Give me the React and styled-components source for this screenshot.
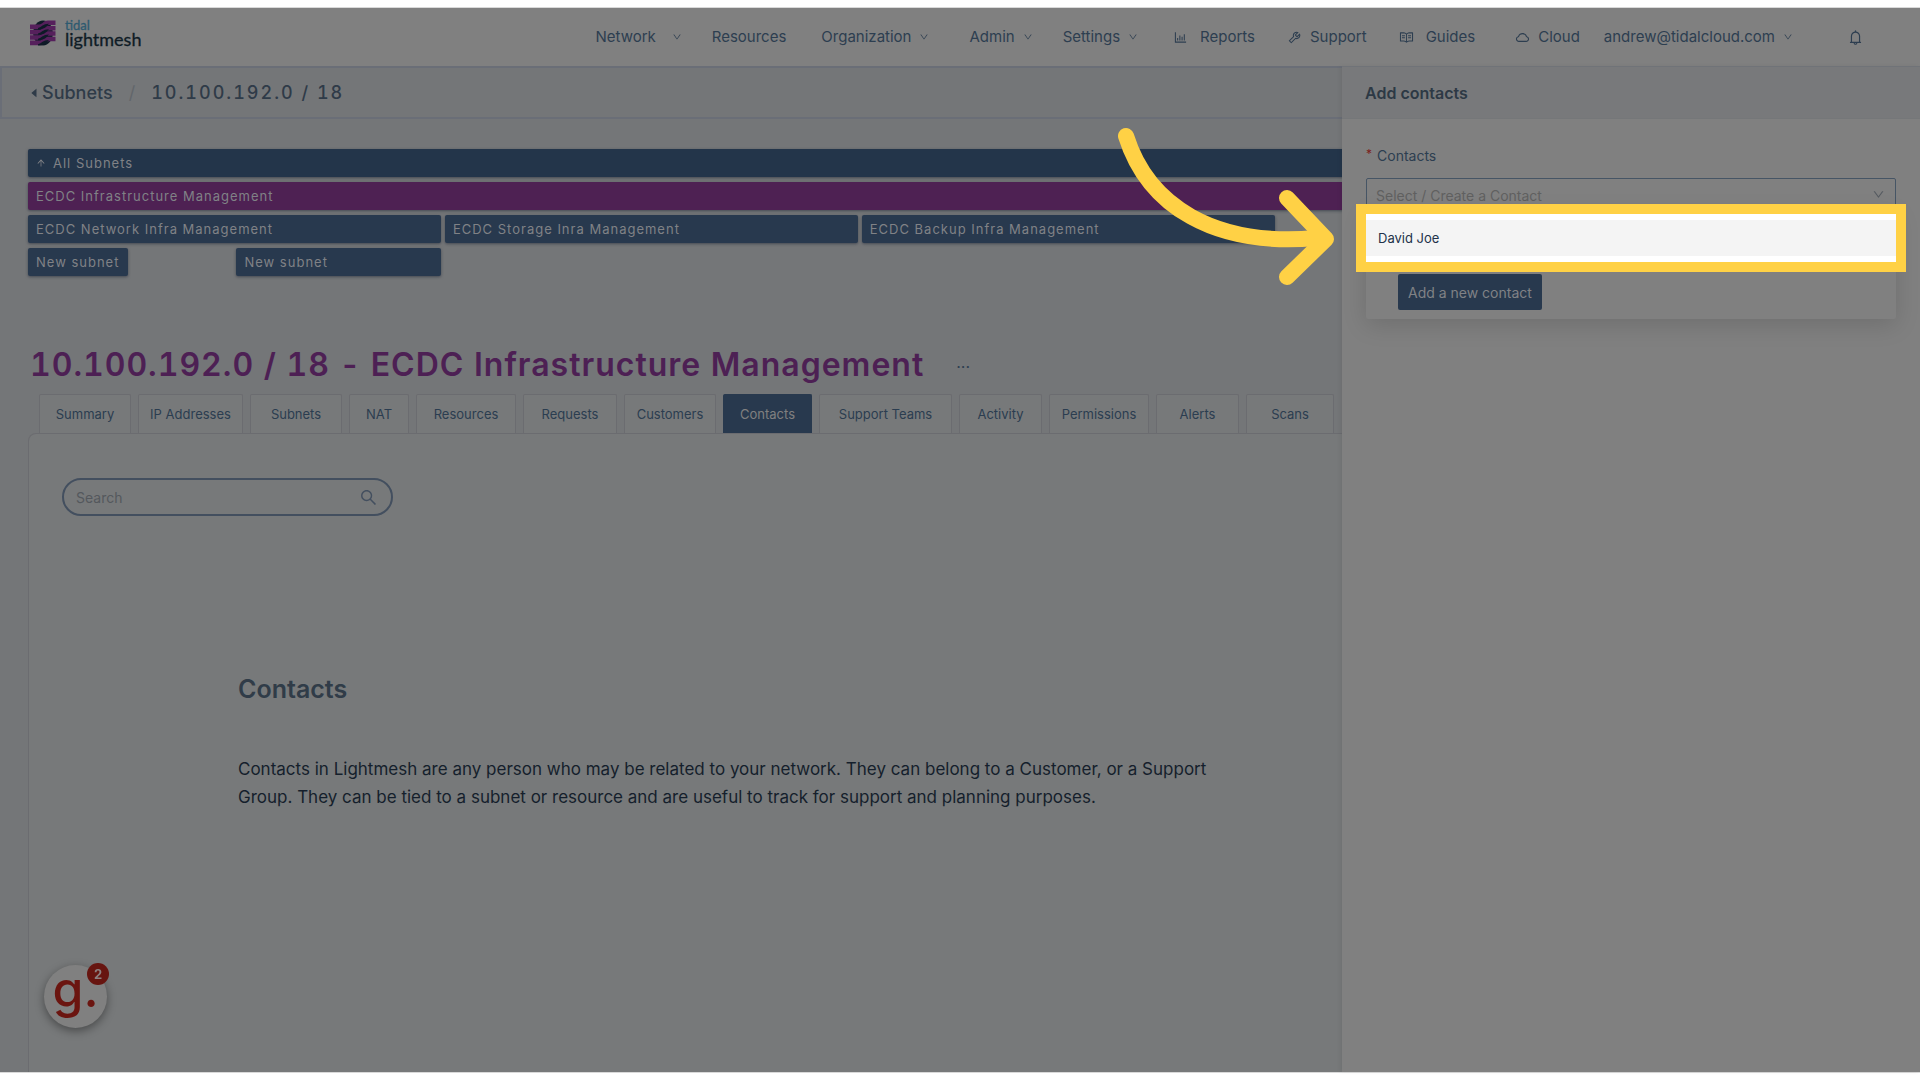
import React from "react";
import styled, { createGlobalStyle } from "styled-components";
import {
  AiFillCaretLeft,
  AiOutlineArrowUp,
  AiOutlineBarChart,
  AiOutlineBell,
  AiOutlineCloud,
  AiOutlineDown,
  AiOutlineRead,
  AiOutlineSearch,
  AiOutlineTool,
} from "react-icons/ai";

const GlobalStyle = createGlobalStyle`
  * {
    box-sizing: border-box;
  }
  body {
    margin: 0;
    background: #ffffff;
    font-family: Inter, "Liberation Sans", sans-serif;
  }
  button, input, select {
    font-family: inherit;
  }
  a {
    color: inherit;
    text-decoration: none;
  }
`;

const Frame = styled.div`
  min-height: 100vh;
  padding: 7px 0;
  display: flex;
  flex-direction: column;
  overflow: hidden;
`;

const Shell = styled.div`
  position: relative;
  flex: 1;
  display: flex;
  flex-direction: column;
  border-top: 1px solid #d9d9d9;
  border-bottom: 1px solid #d9d9d9;
  background: #747678;
  color: #2d3e50;
`;

const TopBar = styled.header`
  display: flex;
  align-items: center;
  justify-content: space-between;
  height: 58px;
  padding: 0 56px 0 30px;
  background: #808080;
`;

const Brand = styled.a`
  display: flex;
  align-items: center;
  gap: 9px;
  margin-bottom: 8px;
`;

const BrandName = styled.span`
  display: flex;
  flex-direction: column;
  font-family: Lato, sans-serif;
  font-size: 18px;
  line-height: 16px;
  color: #0f1c26;
  -webkit-text-stroke: 0.3px currentColor;
`;

const BrandParent = styled.span`
  font-size: 13px;
  line-height: 12px;
  color: #2d5a70;
`;

const Nav = styled.nav`
  display: flex;
  align-items: center;
`;

const NavLink = styled.a`
  display: flex;
  align-items: center;
  gap: ${({ $gap }) => $gap || 8}px;
  margin-left: ${({ $before }) => $before || 32}px;
  font-size: 15px;
  line-height: 24px;
  white-space: nowrap;
`;

const Crumbs = styled.div`
  display: flex;
  align-items: center;
  height: 53px;
  padding: 0 26px;
  border: 2px solid #6a6e77;
  font-size: 18px;
  font-weight: 500;
  color: #2f3b48;
`;

const CrumbLink = styled.a`
  display: flex;
  align-items: center;
  gap: 2px;
`;

const CrumbSlash = styled.span`
  margin: 0 16px;
  font-weight: 400;
  color: #62666b;
`;

const CrumbCurrent = styled.span`
  font-variant-numeric: tabular-nums;
  letter-spacing: 2px;
`;

const SubnetMap = styled.div`
  display: grid;
  grid-template-columns: repeat(18, minmax(0, 1fr));
  column-gap: 4px;
  row-gap: 5px;
  padding: 30px 20px 0 28px;
`;

const SubnetBar = styled.a`
  grid-column: ${({ $from, $span }) => `${$from} / span ${$span}`};
  display: flex;
  align-items: center;
  gap: 7px;
  height: 28px;
  padding: 0 8px;
  border-radius: 2px;
  background: ${({ $tone }) => $tone || "#28394e"};
  box-shadow: 0 1px 3px rgba(20, 30, 45, 0.5);
  font-size: 13px;
  letter-spacing: 1px;
  color: #808286;
  white-space: nowrap;
`;

const TitleRow = styled.div`
  display: flex;
  align-items: center;
  gap: 32px;
  padding: 67px 30px 0;
`;

const Title = styled.h1`
  margin: 0;
  font-size: 32px;
  font-weight: 600;
  font-variant-numeric: tabular-nums;
  line-height: 44px;
  letter-spacing: 1px;
  color: #4d2054;
`;

const MoreButton = styled.button`
  border: none;
  padding: 4px 0 0;
  background: none;
  font-size: 16px;
  color: #2d3e50;
`;

const Tabs = styled.div`
  display: flex;
  gap: 7px;
  padding: 7px 39px 0;
`;

const Tab = styled.button`
  width: ${({ $width }) => $width}px;
  height: 39px;
  padding: 0;
  border: 1px solid ${({ $active }) => ($active ? "#28394e" : "#6b6c70")};
  border-bottom: none;
  border-radius: 2px 2px 0 0;
  background: ${({ $active }) => ($active ? "#28394e" : "#77797a")};
  color: ${({ $active }) => ($active ? "#808080" : "#2b3d50")};
  font-size: 13px;
  white-space: nowrap;
`;

const Panel = styled.section`
  flex: 1;
  margin: 0 28px;
  padding: 44px 33px;
  border: 1px solid #6b6c70;
  border-bottom: none;
  border-radius: 8px 8px 0 0;
  background: #77797a;
`;

const SearchBox = styled.label`
  display: flex;
  align-items: center;
  width: 331px;
  height: 38px;
  padding: 0 13px 0 12px;
  border: 2px solid #434f5f;
  border-radius: 19px;
  color: #434f5f;
`;

const SearchInput = styled.input`
  flex: 1;
  min-width: 0;
  padding: 0;
  border: none;
  outline: none;
  background: none;
  font-size: 14px;
  &::placeholder {
    color: #54585d;
    opacity: 1;
  }
`;

const About = styled.div`
  max-width: 1156px;
  padding: 151px 0 0 176px;
`;

const AboutTitle = styled.h2`
  margin: 0 0 44px;
  font-size: 25px;
  font-weight: 600;
  line-height: 44px;
  color: #303c48;
`;

const AboutText = styled.p`
  margin: 0;
  font-size: 17px;
  line-height: 28px;
  color: #151f2c;
`;

const Drawer = styled.aside`
  position: absolute;
  top: 58px;
  right: 0;
  bottom: 0;
  width: 578px;
  background: #808080;
  box-shadow: -2px 0 4px rgba(0, 0, 0, 0.06);
`;

const DrawerTitle = styled.h2`
  margin: 0;
  height: 53px;
  padding: 0 23px;
  border-top: 1px solid #707378;
  border-bottom: 1px solid #757779;
  background: #78797b;
  font-size: 16px;
  font-weight: 600;
  line-height: 52px;
  color: #2d3945;
`;

const Form = styled.div`
  padding: 25px 24px;
`;

const FieldLabel = styled.label`
  display: flex;
  gap: 5px;
  font-size: 14px;
  line-height: 24px;
`;

const Required = styled.span`
  font-size: 12px;
  line-height: 20px;
  color: #7c201c;
`;

const Field = styled.div`
  position: relative;
  margin-top: 10px;
`;

const Select = styled.select`
  display: block;
  width: 100%;
  height: 34px;
  padding: 0 9px;
  border: 1px solid #465565;
  border-radius: 2px;
  appearance: none;
  background: none;
  font-size: 14px;
  color: #606060;
`;

const SelectArrow = styled(AiOutlineDown)`
  position: absolute;
  top: 10px;
  right: 11px;
  color: #555a60;
`;

const Menu = styled.div`
  position: absolute;
  top: 32px;
  left: 0;
  right: 0;
  padding: 4px 0 9px;
  border-radius: 2px;
  background: #808080;
  box-shadow: 0 6px 24px rgba(0, 0, 0, 0.14);
`;

const Spotlight = styled.ul`
  position: relative;
  margin: 0;
  padding: 6px 0;
  list-style: none;
  background: #ffffff;
  outline: 10px solid #ffd145;
`;

const Option = styled.li`
  height: 36px;
  padding: 0 12px;
  background: #f4f4f4;
  font-size: 13px;
  line-height: 36px;
  color: #22324a;
`;

const Pointer = styled.svg`
  position: absolute;
  top: -90px;
  right: calc(100% + 28px);
  fill: none;
  stroke: #ffd145;
  stroke-width: 16;
  stroke-linecap: round;
  stroke-linejoin: round;
`;

const AddButton = styled.button`
  display: block;
  height: 36px;
  margin: 12px 0 0 32px;
  padding: 0 10px;
  border: none;
  border-radius: 2px;
  background: #28394e;
  font-size: 14px;
  color: #808286;
`;

const Helper = styled.button`
  position: fixed;
  left: 44px;
  bottom: 52px;
  width: 63px;
  height: 63px;
  padding: 0 0 16px;
  border: none;
  border-radius: 50%;
  background: #808080;
  box-shadow: 0 3px 10px rgba(0, 0, 0, 0.4);
  font-size: 50px;
  font-weight: 500;
  line-height: 40px;
  color: #6b1510;
`;

const HelperCount = styled.span`
  position: absolute;
  top: -2px;
  right: -2px;
  width: 22px;
  height: 22px;
  border-radius: 50%;
  background: #671510;
  font-size: 13px;
  font-weight: 700;
  line-height: 22px;
  text-align: center;
  color: #8c8080;
`;

const nav = [
  { label: "Network", menu: true, gap: 16 },
  { label: "Resources", before: 30 },
  { label: "Organization", menu: true, before: 35 },
  { label: "Admin", menu: true, before: 40 },
  { label: "Settings", menu: true, before: 30 },
  { label: "Reports", icon: AiOutlineBarChart, gap: 12, before: 35 },
  { label: "Support", icon: AiOutlineTool },
  { label: "Guides", icon: AiOutlineRead, gap: 12 },
  { label: "Cloud", icon: AiOutlineCloud, before: 40 },
  { label: "andrew@tidalcloud.com", menu: true, before: 24 },
];

const subnets = [
  { name: "All Subnets", from: 1, span: 18, tone: "#23354a", up: true },
  { name: "ECDC Infrastructure Management", from: 1, span: 18, tone: "#4e2153" },
  { name: "ECDC Network Infra Management", from: 1, span: 4 },
  { name: "ECDC Storage Inra Management", from: 5, span: 4 },
  { name: "ECDC Backup Infra Management", from: 9, span: 4 },
  { name: "New subnet", from: 1, span: 1 },
  { name: "New subnet", from: 3, span: 2 },
];

const tabs = [
  ["Summary", 92],
  ["IP Addresses", 105],
  ["Subnets", 92],
  ["NAT", 60],
  ["Resources", 100],
  ["Requests", 94],
  ["Customers", 92],
  ["Contacts", 89],
  ["Support Teams", 133],
  ["Activity", 83],
  ["Permissions", 100],
  ["Alerts", 83],
  ["Scans", 88],
];

function LogoMark() {
  const ribbons = [4.4, 9.8, 15.2, 20.6];
  return (
    <svg width="26" height="26" viewBox="0 0 26 26" aria-hidden="true">
      <ellipse cx="13" cy="13" rx="10" ry="12.5" fill="#0e1a27" />
      {ribbons.map((y) => (
        <path
          key={y}
          fill="#56205c"
          d={`M0 ${y} H9 C13 ${y} 13 ${y - 3.9} 18 ${y - 3.9} H25.5 V${y + 0.6} H19 C15 ${y + 0.6} 14 ${
            y + 4.6
          } 9 ${y + 4.6} H0 Z`}
        />
      ))}
      <g fill="#0e1a27">
        {ribbons.map((y) => (
          <path
            key={y}
            d={`M8 ${y + 3.6} C12 ${y + 2.6} 12.5 ${y - 0.4} 19 ${y - 0.6} C17 ${y + 1.6} 15 ${y + 5} 8 ${y + 5} Z`}
          />
        ))}
      </g>
    </svg>
  );
}

function App() {
  return (
    <Frame>
      <GlobalStyle />
      <Shell>
        <TopBar>
          <Brand href="#home">
            <LogoMark />
            <BrandName>
              <BrandParent>tidal</BrandParent>
              lightmesh
            </BrandName>
          </Brand>
          <Nav>
            {nav.map(({ label, icon: Icon, menu, gap, before }) => (
              <NavLink key={label} href="#nav" $gap={gap} $before={before}>
                {Icon && <Icon size={15} />}
                {label}
                {menu && <AiOutlineDown size={10} />}
              </NavLink>
            ))}
            <NavLink href="#alerts" aria-label="Notifications" $before={54}>
              <AiOutlineBell size={17} />
            </NavLink>
          </Nav>
        </TopBar>

        <Crumbs>
          <CrumbLink href="#subnets">
            <AiFillCaretLeft size={12} />
            Subnets
          </CrumbLink>
          <CrumbSlash>/</CrumbSlash>
          <CrumbCurrent>10.100.192.0 / 18</CrumbCurrent>
        </Crumbs>

        <SubnetMap>
          {subnets.map(({ name, from, span, tone, up }) => (
            <SubnetBar key={name + from} href="#subnet" $from={from} $span={span} $tone={tone}>
              {up && <AiOutlineArrowUp size={10} />}
              {name}
            </SubnetBar>
          ))}
        </SubnetMap>

        <TitleRow>
          <Title>10.100.192.0 / 18 - ECDC Infrastructure Management</Title>
          <MoreButton aria-label="More actions">···</MoreButton>
        </TitleRow>

        <Tabs role="tablist">
          {tabs.map(([label, width]) => (
            <Tab
              key={label}
              role="tab"
              aria-selected={label === "Contacts"}
              $active={label === "Contacts"}
              $width={width}
            >
              {label}
            </Tab>
          ))}
        </Tabs>

        <Panel>
          <SearchBox>
            <SearchInput type="text" placeholder="Search" aria-label="Search" />
            <AiOutlineSearch size={19} />
          </SearchBox>
          <About>
            <AboutTitle>Contacts</AboutTitle>
            <AboutText>
              Contacts in Lightmesh are any person who may be related to your network. They can
              belong to a Customer, or a Support Group. They can be tied to a subnet or resource
              and are useful to track for support and planning purposes.
            </AboutText>
          </About>
        </Panel>

        <Drawer>
          <DrawerTitle>Add contacts</DrawerTitle>
          <Form>
            <FieldLabel htmlFor="contact">
              <Required>*</Required>
              Contacts
            </FieldLabel>
            <Field>
              <Select id="contact" defaultValue="">
                <option value="">Select / Create a Contact</option>
                <option value="david">David Joe</option>
              </Select>
              <SelectArrow size={13} />
              <Menu>
                <Spotlight>
                  <Option>David Joe</Option>
                  <Pointer width="224" height="164" viewBox="0 0 224 164" aria-hidden="true">
                    <path d="M12 12 C34 82 100 123 202 114" />
                    <path d="M173 74 L212 115 L173 153" />
                  </Pointer>
                </Spotlight>
                <AddButton>Add a new contact</AddButton>
              </Menu>
            </Field>
          </Form>
        </Drawer>

        <Helper aria-label="Open guide">
          g.
          <HelperCount>2</HelperCount>
        </Helper>
      </Shell>
    </Frame>
  );
}

export default App;
